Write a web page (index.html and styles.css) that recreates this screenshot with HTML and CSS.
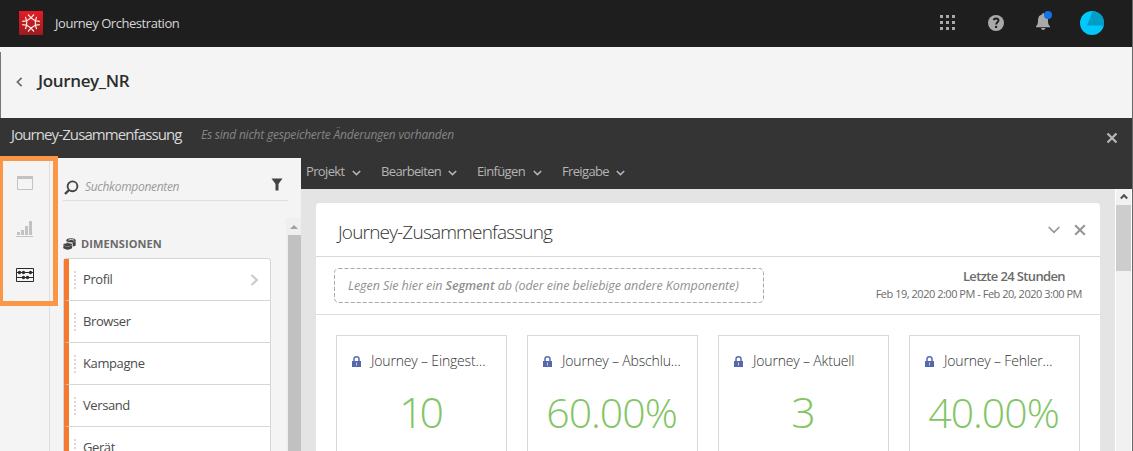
FILE: index.html
```html
<!DOCTYPE html>
<html lang="de">
<head>
<meta charset="utf-8">
<title>Journey Orchestration</title>
<link rel="stylesheet" href="styles.css">
</head>
<body>
<div class="app">
  <header class="topbar">
    <svg class="logo" width="24" height="24" viewBox="0 0 24 24"><defs><linearGradient id="g" x1="0" y1="0" x2="0" y2="1"><stop offset="0" stop-color="#e51c25"/><stop offset="1" stop-color="#9b1b20"/></linearGradient></defs><rect width="24" height="24" fill="url(#g)"/><g fill="none" stroke="#ffe9e6" stroke-width="1.200"><path d="M9 3.500l3 3.400 3-3.400M9 20.500l3-3.400 3 3.400M3.200 10.400l4.400-.6L6.400 5.800M3.200 13.600l4.400.6-1.200 4M20.800 10.400l-4.400-.6 1.200-4M20.800 13.600l-4.400.6 1.200 4"/><path d="M12 6.900l4.400 2.900v4.400L12 17.100l-4.400-2.900V9.800z"/></g></svg>
    <span class="product">Journey Orchestration</span>
    <div class="tools">
      <svg width="16" height="16" viewBox="0 0 16 16" fill="#a9a9a9"><path d="M0 0h3v3H0zM6 0h3v3H6zM12 0h3v3h-3zM0 6h3v3H0zM6 6h3v3H6zM12 6h3v3h-3zM0 12h3v3H0zM6 12h3v3H6zM12 12h3v3h-3z"/></svg>
      <svg width="16" height="16" viewBox="0 0 16 16"><circle cx="8" cy="8" r="8" fill="#a9a9a9"/><path d="M5.600 5.100C6 3.800 7 3.500 8 3.500c1.600 0 2.500.8 2.500 2 0 1.700-2.300 1.900-2.300 3.900" fill="none" stroke="#1e1e1e" stroke-width="1.900"/><circle cx="8.100" cy="11.900" r="1.200" fill="#1e1e1e"/></svg>
      <svg width="17" height="20" viewBox="0 0 17 20"><path d="M6 3.500Q6 2 7.200 2t1.200 1.500c2.400.6 3.600 2.500 3.600 5.500 0 4 .6 4.700 2 6.200v1H0v-1c1.500-1.500 2-2.200 2-6.200 0-3 1.500-4.900 4-5.500zM5 17h4.400c-.3 1.300-1 2-2.200 2S5.300 18.300 5 17z" fill="#a9a9a9"/><circle cx="12" cy="4" r="4" fill="#1473e6"/></svg>
      <svg width="24" height="24" viewBox="0 0 24 24"><defs><clipPath id="avatar"><circle cx="12" cy="12" r="12"/></clipPath></defs><g clip-path="url(#avatar)"><path fill="#00c8fa" d="M0 0h24v24H0z"/><path fill="#009dc4" d="M12.800 0L7 14.400h14.500l2.500 2V0z"/></g></svg>
    </div>
  </header>
  <div class="titlebar">
    <svg width="7" height="10" viewBox="0 0 7 10"><path d="M5.600.8L1.400 5l4.200 4.200" fill="none" stroke="#6a6a6a" stroke-width="1.700"/></svg>
    <h1 class="journey">Journey_NR</h1>
  </div>
  <div class="projectbar">
    <span class="project">Journey-Zusammenfassung</span>
    <span class="unsaved">Es sind nicht gespeicherte Änderungen vorhanden</span>
    <svg class="close" width="12" height="12" viewBox="0 0 12 12"><path d="M1.500 1.500l9 9M10.500 1.500l-9 9" stroke="#b5b5b5" stroke-width="2.300"/></svg>
  </div>
  <div class="body">
    <nav class="rail">
      <svg width="18" height="14" viewBox="0 0 18 14"><path d="M1.500.500h15v13h-15z" fill="none" stroke="#c2c2c2"/><path d="M1 0h16v3H1z" fill="#c2c2c2"/></svg>
      <svg width="18" height="16" viewBox="0 0 18 16" fill="#c2c2c2"><path d="M1 11h3v3H1zM5 9h3v5H5zM9 5h3v9H9zM13 0h3v14h-3zM0 15h17v1H0z"/></svg>
      <svg width="18" height="14" viewBox="0 0 18 14"><g fill="none" stroke="#2b2b2b"><path d="M.5.5h17v13H.5zM0 4.500h18M0 9.500h18"/></g><g fill="#2b2b2b"><circle cx="3.500" cy="4.500" r="1.700"/><circle cx="7.500" cy="4.500" r="1.700"/><circle cx="14.500" cy="4.500" r="1.700"/><circle cx="7.500" cy="9.500" r="1.700"/><circle cx="11.500" cy="9.500" r="1.700"/></g></svg>
      <div class="highlight"></div>
    </nav>
    <aside class="sidebar">
      <div class="search">
        <svg width="15" height="15" viewBox="0 0 15 15" fill="none" stroke="#444"><circle cx="8.500" cy="6.300" r="4.900" stroke-width="1.900"/><path d="M5 10l-4 4" stroke-width="2.400"/></svg>
        <span class="placeholder">Suchkomponenten</span>
        <svg width="12" height="13" viewBox="0 0 12 13"><path d="M.5.500h11L7.500 6v6.500h-3V6z" fill="#444"/></svg>
      </div>
      <div class="components">
        <div class="column">
          <div class="group"><svg width="13" height="12" viewBox="0 0 13 12"><ellipse cx="8" cy="2.300" rx="4.600" ry="2" fill="#444"/><path d="M3.500 3.500v1.800h6.200v3.200c2 0 3-.8 3-1.500v-4c-2 2-7 2-9.200.5z" fill="#444"/><path d="M5.200 2.100q3-1.300 6 0" stroke="#ddd" fill="none" stroke-width=".9"/><ellipse cx="4.700" cy="6.600" rx="4.400" ry="1.700" fill="#444"/><path d="M.3 7.500q4.400 2 8.800 0v2.800q-4.400 2.800-8.800 0z" fill="#444"/><path d="M.4 5.300q4-1.600 8.500-.2" stroke="#f4f4f4" fill="none" stroke-width=".8"/></svg><span class="grouplabel">DIMENSIONEN</span></div>
          <ul class="list">
            <li class="item"><i class="grip"></i><span>Profil</span><svg class="more" width="9" height="12" viewBox="0 0 9 12"><path d="M1.500 1l5.500 5-5.500 5" fill="none" stroke="#c8c8c8" stroke-width="2"/></svg></li>
            <li class="item"><i class="grip"></i><span>Browser</span></li>
            <li class="item"><i class="grip"></i><span>Kampagne</span></li>
            <li class="item"><i class="grip"></i><span>Versand</span></li>
            <li class="item"><i class="grip"></i><span>Gerät</span></li>
          </ul>
        </div>
        <div class="sidescroll"><svg width="8" height="4" viewBox="0 0 8 4"><path d="M0 4l4-4 4 4z" fill="#a0a0a0"/></svg><div class="sidethumb"></div></div>
      </div>
    </aside>
    <main class="main">
      <nav class="menu">
        <span class="entry projekt">Projekt</span><svg class="chev" width="9" height="6" viewBox="0 0 9 6"><path d="M.8 1l3.700 3.600L8.200 1"/></svg>
        <span class="entry bearbeiten">Bearbeiten</span><svg class="chev" width="9" height="6" viewBox="0 0 9 6"><path d="M.8 1l3.700 3.600L8.200 1"/></svg>
        <span class="entry einfuegen">Einfügen</span><svg class="chev" width="9" height="6" viewBox="0 0 9 6"><path d="M.8 1l3.700 3.600L8.200 1"/></svg>
        <span class="entry freigabe">Freigabe</span><svg class="chev" width="9" height="6" viewBox="0 0 9 6"><path d="M.8 1l3.700 3.600L8.200 1"/></svg>
      </nav>
      <div class="workspace">
        <section class="panel">
          <div class="panelhead">
            <h2 class="paneltitle">Journey-Zusammenfassung</h2>
            <svg width="12" height="8" viewBox="0 0 12 8"><path d="M.7 1L6 6.300 11.300 1" fill="none" stroke="#969696" stroke-width="1.700"/></svg>
            <svg width="12" height="12" viewBox="0 0 12 12"><path d="M1.200 1.200l9.600 9.600M10.800 1.200l-9.600 9.600" stroke="#969696" stroke-width="2.100"/></svg>
          </div>
          <div class="segmentrow">
            <div class="drop"><svg class="dash" width="430" height="35"><rect x=".5" y=".5" width="429" height="34" rx="4" fill="none" stroke="#a8a8a8" stroke-dasharray="4 2"/></svg><span class="droptext">Legen Sie hier ein <b>Segment</b> ab (oder eine beliebige andere Komponente)</span></div>
            <div class="dates"><div class="range">Letzte 24 Stunden</div><div class="period">Feb 19, 2020 2:00 PM - Feb 20, 2020 3:00 PM</div></div>
          </div>
          <div class="cards">
            <article class="card"><div class="cardhead"><svg class="lock" width="9" height="11" viewBox="0 0 9 11"><path d="M2 5V3q0-2.200 2.500-2.200T7 3v2" fill="none" stroke="#5668ad" stroke-width="1.500"/><path d="M0 5h9v6H0z" fill="#5668ad"/><path d="M4 6.500h1v3H4z" fill="#c5cbe3"/></svg><span class="name">Journey – Eingest…</span></div><div class="value">10</div></article>
            <article class="card"><div class="cardhead"><svg class="lock" width="9" height="11" viewBox="0 0 9 11"><path d="M2 5V3q0-2.200 2.500-2.200T7 3v2" fill="none" stroke="#5668ad" stroke-width="1.500"/><path d="M0 5h9v6H0z" fill="#5668ad"/><path d="M4 6.500h1v3H4z" fill="#c5cbe3"/></svg><span class="name">Journey – Abschlu…</span></div><div class="value percent">60.00%</div></article>
            <article class="card"><div class="cardhead"><svg class="lock" width="9" height="11" viewBox="0 0 9 11"><path d="M2 5V3q0-2.200 2.500-2.200T7 3v2" fill="none" stroke="#5668ad" stroke-width="1.500"/><path d="M0 5h9v6H0z" fill="#5668ad"/><path d="M4 6.500h1v3H4z" fill="#c5cbe3"/></svg><span class="name">Journey – Aktuell</span></div><div class="value">3</div></article>
            <article class="card"><div class="cardhead"><svg class="lock" width="9" height="11" viewBox="0 0 9 11"><path d="M2 5V3q0-2.200 2.500-2.200T7 3v2" fill="none" stroke="#5668ad" stroke-width="1.500"/><path d="M0 5h9v6H0z" fill="#5668ad"/><path d="M4 6.500h1v3H4z" fill="#c5cbe3"/></svg><span class="name">Journey – Fehler…</span></div><div class="value percent">40.00%</div></article>
          </div>
        </section>
        <div class="mainscroll"><svg width="8" height="7" viewBox="0 0 8 7"><path d="M.8 5.500L4 2.200l3.200 3.300" fill="none" stroke="#505050" stroke-width="2"/></svg><div class="mainthumb"></div></div>
      </div>
    </main>
  </div>
</div>
</body>
</html>
```

FILE: styles.css
```css
* { box-sizing: border-box; }
body { margin: 0; overflow: hidden; font-family: "Open Sans", "Noto Sans", sans-serif; white-space: nowrap; }
h1, h2, ul { margin: 0; padding: 0; }
svg { display: block; flex: none; }
.app { width: 1133px; height: 451px; overflow: hidden; display: flex; flex-direction: column; border-right: 1px solid #686868; background: #f4f4f4; }
.topbar { height: 47px; flex: none; display: flex; align-items: center; background: #1e1e1e; padding-left: 19px; }
.logo { margin-top: -1px; }
.product { margin: -2px 0 0 12px; font-size: 13px; color: #d6d6d6; letter-spacing: -.45px; }
.tools { margin-left: auto; display: flex; align-items: center; padding-right: 28px; }
.tools svg { margin-top: -1px; }
.tools svg:nth-child(2) { margin-left: 32px; }
.tools svg:nth-child(3) { margin: -5px 0 0 32px; }
.tools svg:nth-child(4) { margin-left: 27px; }
.titlebar { height: 66px; margin-top: 5px; flex: none; display: flex; align-items: center; border-left: 1px solid #777; padding: 0 0 6px 15px; }
.journey { margin: -3px 0 0 15px; font-size: 17px; font-weight: 600; color: #2c2c2c; letter-spacing: -.35px; }
.projectbar { height: 40px; flex: none; display: flex; align-items: center; background: #343434; padding: 0 14px 6px 11px; }
.project { width: 190px; font-size: 15px; color: #d8d8d8; letter-spacing: -.9px; margin-top: -2px; }
.unsaved { font-size: 12px; font-style: italic; color: #858585; letter-spacing: -.22px; margin-top: -2px; }
.close { margin: 6px 0 0 auto; }
.body { flex: 1; display: flex; min-height: 0; }
.rail { position: relative; width: 50px; flex: none; border-right: 1px solid #dedede; padding: 18px 0 0 16px; display: flex; flex-direction: column; gap: 31px; }
.highlight { position: absolute; left: 0; top: -2px; width: 58px; height: 150px; border: 5px solid #f99746; border-left-width: 3px; }
.sidebar { width: 251px; flex: none; padding-left: 13px; }
.search { width: 225px; height: 43px; border-bottom: 1px solid #dedede; display: flex; align-items: center; padding: 17px 5px 0 1px; }
.placeholder { flex: 1; margin: -3px 0 0 6px; font-size: 12px; font-style: italic; color: #9a9a9a; letter-spacing: -.3px; }
.search svg:last-child { margin-top: -7px; }
.components { display: flex; justify-content: space-between; margin-top: 17px; height: 233px; }
.column { width: 208px; }
.group { height: 40px; display: flex; align-items: center; padding-top: 12px; gap: 5px; }
.grouplabel { margin-top: -1px; font-size: 11px; font-weight: 700; color: #6a6a6a; letter-spacing: .1px; }
.list { list-style: none; border: 1px solid #d6d6d6; border-radius: 3px; background: #fff; }
.item { height: 42px; display: flex; align-items: center; border-left: 5px solid #f47a31; border-bottom: 1px solid #d6d6d6; padding-right: 11px; font-size: 13px; color: #4b4b4b; letter-spacing: -.4px; }
.item span { margin-top: -2px; }
.grip { width: 2px; height: 18px; margin: 0 7px 0 5px; background: repeating-linear-gradient(#d9d9d9 0 2px, transparent 2px 4px); }
.more { margin-left: auto; }
.sidescroll { width: 15px; background: #efefef; padding: 7px 0 0 2px; }
.sidescroll svg { margin-left: 2px; }
.sidethumb { height: 220px; margin-top: 6px; background: #c1c1c1; }
.main { flex: 1; min-width: 0; display: flex; flex-direction: column; }
.menu { height: 31px; flex: none; background: #343434; display: flex; align-items: center; padding: 0 0 5px 5px; color: #b5b5b5; font-size: 13px; letter-spacing: -.65px; }
.chev { margin: 3px 20px 0 0; fill: none; stroke: #b5b5b5; stroke-width: 1.6; }
.projekt { width: 46px; }
.bearbeiten { width: 67px; }
.einfuegen { width: 56px; }
.freigabe { width: 54px; }
.workspace { flex: 1; display: flex; justify-content: space-between; background: #e4e4e4; padding-left: 15px; min-height: 0; }
.panel { width: 784px; margin-top: 14px; background: #fff; border-radius: 4px 4px 0 0; }
.panelhead { height: 54px; border-bottom: 1px solid #d9d9d9; display: flex; align-items: center; padding: 0 14px 0 22px; gap: 14px; }
.paneltitle { margin-right: auto; padding-top: 5px; font-size: 19px; font-weight: 300; color: #333; letter-spacing: -.82px; }
.segmentrow { height: 58px; display: flex; align-items: center; justify-content: space-between; border-bottom: 1px solid #dedede; padding: 0 18px; }
.drop { position: relative; width: 430px; height: 35px; display: flex; align-items: center; padding-left: 14px; }
.dash { position: absolute; left: 0; top: 0; }
.droptext { font-size: 12.5px; font-style: italic; color: #8f8f8f; letter-spacing: -.07px; }
.droptext b { font-weight: 600; }
.dates { color: #6b6b6b; padding-bottom: 1px; text-align: right; }
.range { font-size: 13px; line-height: 18px; font-weight: 600; padding-right: 17px; letter-spacing: -.63px; }
.period { font-size: 11px; line-height: 18px; letter-spacing: -.48px; }
.cards { display: flex; gap: 20px; padding: 20px 20px 0; height: 136px; }
.card { width: 171px; flex: none; border: 1px solid #d9d9d9; border-bottom: 0; }
.cardhead { display: flex; align-items: center; height: 50px; padding-left: 15px; }
.lock { margin-top: 1px; }
.name { margin: -1px 0 0 10px; font-size: 14px; font-weight: 300; color: #333; letter-spacing: -.17px; }
.value { height: 54px; line-height: 51px; text-align: center; font-size: 43px; font-weight: 300; color: #82c566; letter-spacing: -4px; padding-right: 4px; }
.percent { font-size: 41px; line-height: 53px; letter-spacing: -1px; padding-right: 2px; }
.mainscroll { width: 17px; border-left: 1px solid #fff; border-right: 1px solid #fff; background: #f1f1f1; }
.mainscroll svg { margin: 4px 0 5px 4px; }
.mainthumb { height: 66px; background: #cdcdcd; }
```
